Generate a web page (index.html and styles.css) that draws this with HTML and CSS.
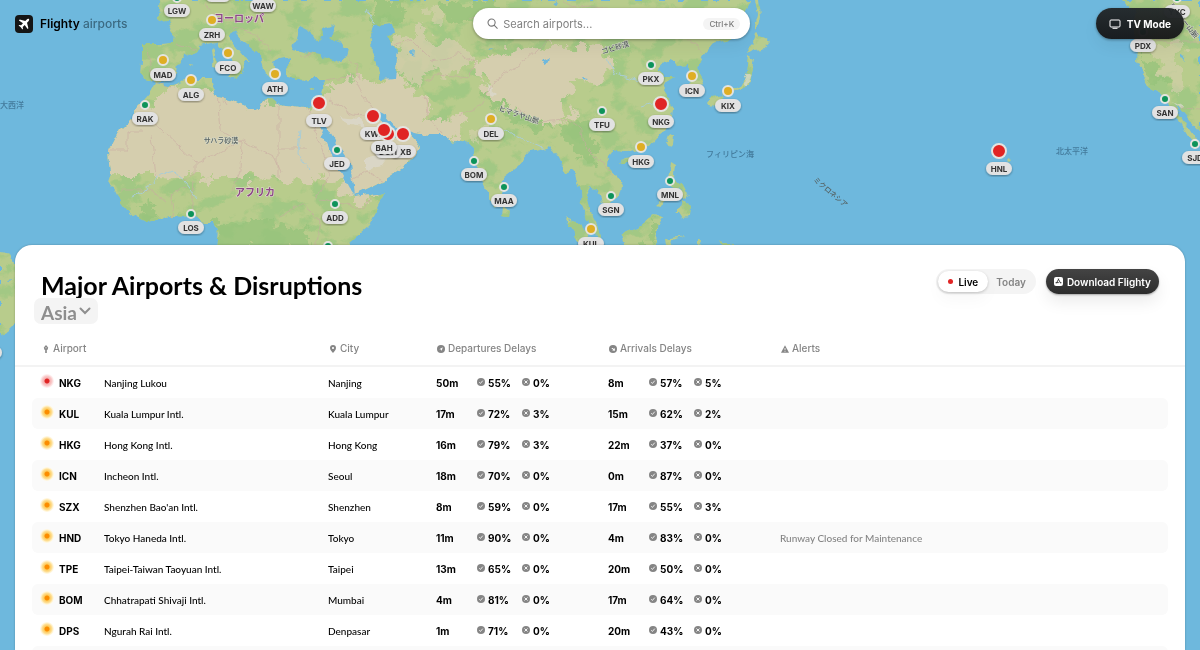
FILE: index.html
```html
<!DOCTYPE html>
<html lang="en">
<head>
<meta charset="utf-8">
<title>Flighty Airports</title>
<link rel="stylesheet" href="styles.css">
</head>
<body>
<svg class="sprite" aria-hidden="true">
  <symbol id="ok" viewBox="0 0 16 16"><circle cx="8" cy="8" r="8" fill="#858585"/><path d="M4.500 8.400l2.400 2.500 4.600-5.600" fill="none" stroke="#fff" stroke-width="1.700"/></symbol>
  <symbol id="no" viewBox="0 0 16 16"><circle cx="8" cy="8" r="8" fill="#858585"/><path d="M5 5l6 6M11 5l-6 6" fill="none" stroke="#fff" stroke-width="1.800"/></symbol>
</svg>

<svg class="map" viewBox="0 0 1200 650" preserveAspectRatio="xMinYMin slice" role="img" aria-label="World map of airports">
  <defs>
    <filter id="coast" x="0" y="0" width="1200" height="650" filterUnits="userSpaceOnUse" color-interpolation-filters="sRGB">
      <feTurbulence type="fractalNoise" baseFrequency="0.09" numOctaves="3" seed="4" result="n"/>
      <feDisplacementMap in="SourceGraphic" in2="n" scale="8" xChannelSelector="R" yChannelSelector="G"/>
    </filter>
    <filter id="rough" x="0" y="0" width="1200" height="650" filterUnits="userSpaceOnUse" color-interpolation-filters="sRGB">
      <feTurbulence type="fractalNoise" baseFrequency="0.07" numOctaves="4" seed="12" result="n"/>
      <feDisplacementMap in="SourceGraphic" in2="n" scale="30" xChannelSelector="R" yChannelSelector="G"/>
    </filter>
    <filter id="patches" x="0" y="0" width="1200" height="650" filterUnits="userSpaceOnUse" color-interpolation-filters="sRGB">
      <feTurbulence type="fractalNoise" baseFrequency="0.035 0.05" numOctaves="4" seed="9" result="n"/>
      <feColorMatrix in="n" type="matrix" values="0 0 0 0 0.6  0 0 0 0 0.78  0 0 0 0 0.5  9 0 0 0 -4.6" result="c"/>
      <feComposite in="c" in2="SourceGraphic" operator="in"/>
    </filter>
    <filter id="shade"><feDropShadow dx="0" dy="1" stdDeviation="1" flood-color="#000" flood-opacity=".4"/></filter>
    <clipPath id="land">
      <path d="M160 0L158 17 168 22 174 32 173 43 160 44 142 44 142 60 141 77 150 79 155 84 167 82 176 73 177 65 184 57 197 51 198 45 206 44 217 42 222 50 232 60 238 68 237 76 241 74 244 67 243 62 251 62 244 57 233 44 230 36 233 30 240 39 251 48 260 56 262 66 267 76 272 78 275 70 273 63 280 60 290 58 287 66 288 77 297 80 310 79 325 79 323 90 318 106 300 108 280 105 272 98 263 100 258 110 243 106 230 100 216 98 213 93 216 88 213 79 190 79 176 84 168 87 155 84 150 93 138 107 133 117 120 130 109 151 111 173 108 182 117 196 130 213 147 222 160 219 173 215 192 216 203 222 213 222 218 230 216 252 345 252 350 243 368 227 378 208 386 192 370 195 355 197 350 187 337 163 325 133 316 118 320 120 335 146 350 169 354 195 383 181 410 163 420 147 415 140 408 132 402 136 393 135 386 130 381 118 377 112 385 116 393 126 402 128 413 133 430 135 447 135 453 143 463 140 472 148 477 167 487 193 495 207 502 200 504 177 517 167 530 152 550 147 558 158 566 174 573 169 580 190 581 206 586 217 594 230 598 241 600 236 596 221 590 210 586 195 590 187 597 190 602 202 607 206 620 195 622 187 618 177 608 166 609 156 614 150 627 153 643 149 655 141 664 131 672 117 673 107 663 90 667 82 675 77 664 77 657 70 665 61 672 58 677 66 688 65 690 80 694 90 700 87 704 80 697 68 703 55 713 43 730 39 741 22 749 0Z"/>
      <path d="M755 0l3 14-3 12-1 3 5-3 2-10-2-16zM755 32l6 6 8 4-6 7-8 1-6 4-1-6 5-5zM749 57l5 3-3 12-2 15-10 1-12 5-8 2-4 9-4 4-3-6 4-6 10-2 8-5 7-3 7-5 3-11zM716 96l5-1 3 3-6 2zM669 134l4 2-1 8-3 3-3-5zM621 160l7-2-1 6-5 0zM504 206l6 5-1 5-6-1zM671 163l5 3-1 10 3 7 6 4-2 4-8-4-5-8zM682 186l6 6-3 8-4-7zM684 201l7 5-1 11-6 1-4-6-6 0 8-5zM671 195l-12 10-3-1 12-10zM656 213l6 5-5 9-1 20-30 5-5-17 17-7zM665 238l20-3-14 5 4 12-8-2zM698 235l3 6-3 7zM565 218l10 4 18 16 9 14-20-4-10-17zM718 241l15 3-4 6zM214 48l2 7-3 2-1-7zM213 57l4 2-1 8-4-2zM226 74l13 0-2 5zM277 84l9 1-8 1zM309 89l7-3-4 4zM189 63l4 1-3 2zM1122 0L1137 12 1134 25 1137 50 1136 62 1145 78 1151 89 1165 96 1170 106 1180 122 1189 137 1195 145 1194 136 1185 124 1176 108 1174 102 1186 116 1198 130 1206 140V0zM1008 157l4 2-3 3zM160-2l12-1 4 3-8 4zM-10 250l20 4 6 12v58l-8 8-8 4h-10z"/>
    </clipPath>
  </defs>
  <rect width="1200" height="650" fill="#6eb8dd"/>
  <g filter="url(#coast)">
    <g clip-path="url(#land)">
      <rect width="1200" height="650" fill="#b8cc8c"/>
      <rect width="1200" height="650" filter="url(#patches)" opacity=".7"/>
      <g fill="#98c47c" filter="url(#rough)" opacity=".8">
        <path d="M372 0h34l-4 22-30 6zM436 4l60-4 4 16-40 8zM148 204l12 12-10 6-16-14zM214 224l40-6 46 8 14 24H216zM560 124l26-6 14 30-12 16-20-18zM640 242l18-26-4 32zM1139 60l14 22 14 8-6-14-10-18zM492 84l22 24 44 20-26 4-44-30z"/>
      </g>
      <g fill="#d5ceae" filter="url(#rough)">
        <path d="M145 102L172 90 206 91 222 98 320 106 331 142 344 172 352 194 340 188 320 176 290 182 250 178 204 178 160 176 94 176V150z"/>
        <path d="M326 84L345 77 362 82 378 100 400 110 430 126 434 148 386 190 355 206 338 158 320 116z"/>
        <path d="M354 76L384 80 396 76 426 96 428 117 462 116 454 146 410 144 385 118 370 98z"/>
        <path d="M396 38L420 28 436 42 462 40 476 64 450 74 424 72 418 86 398 74z" opacity=".75"/>
        <path d="M474 66L506 52 548 48 596 44 612 60 606 76 576 84 562 100 572 118 546 126 514 112 496 100 486 84z"/>
        <path d="M430 6l16 4-6 16-14-6zM480 120l14-4-8 14-8 14-10-4zM1152 50l18-8 16 6-10 16 12 16-8 12-18-12z" opacity=".6"/>
      </g>
      <g fill="#dbdad0" opacity=".7"><path d="M340 116l20 2 4 10-18-4zM366 158l26-6-10 14-16 4zM484 82l14 12-4 3zM746 72l5 2-4 14-4-3zM1172 100l12 6-4 2z"/></g>
      <g fill="none" stroke="#c9a9a2" stroke-width=".8" opacity=".7">
        <path d="M149 118l46 43 22-7 24-14 34 18 6 14M217 92l3 38 20 12M151 134l5 42M109 151h19v-20h14M279 105v44h28M278 149v28M195 161v14l-12 6M241 142l-1 30-8 18M308 108l22 66-14 26M216 78l4 16 6 10M155 84l16 4M148 47l3 28M175 44l20 6M206 2l10 16 24 4 24-8M232 28l20 4 20 18M325 80l28-4 12 22 18 22M330 100l24 14 16 2M383 181l-16-10-14 8M424 96l4 22 14 16M395 44l16-4 20 20 30-6 14 10-6 14-30-4-16 8M460 116l20-10 16-26 30-20 22-20M300 56l40-6 16 14 4 16M516 108l20 14 32-2 12 8 4 18 18 18M590 150l14 14 12 14M470 18l60-6 60-6 70 14 40-8M560 0l40 24 60-4 44 32M1138 42h62M1164 106l36 2M120 190h30l16 12M173 215l-4-22 18-6M192 216l3-36M320 200l20 4 24 4 6-10M316 250l4-30-18-16-22 12"/>
      </g>
      <path d="M132 198l14-8 12-14 14-6 14 12 12 16M300 130l-2 24 12 16M548 156l-8-10-36-16M608 60l8 14 24 6M640 108l18-6M366 10l10 18" fill="none" stroke="#a9cdd6" stroke-width="1"/>
    </g>
    <g fill="#6eb8dd">
      <path d="M293 49l4-15 3-7 10 5 10 8 4-7-2-4 14-5-3 10-4 3 15 10 5 2-2 8-14 4-14-6zM370 34l5-9 18-2 2 9-7 5 10 12-3 29-15 1-3-16-5-13zM410 52l4-3-1 7zM540 62l9-4-3 7zM487 50l7-1-5 2zM553 3l5-2-2 4zM581 78l6 1-4 2zM1180 52l5 4 1 5-3-3zM6 280l8-1-5 2z"/>
      <path d="M316 116l10 10 12 20 13 18 4 30-6-6-14-26-12-28-8-14zM375 110l10 5 9 11 12 3 10 5-7 2-8-4-6 5-8-4-6-12z"/>
    </g>
  </g>

  <g class="place place-land"><text x="239" y="22">ヨーロッパ</text><text x="255" y="196">アフリカ</text></g>
  <g class="place place-sea"><text x="12" y="108">大西洋</text><text x="730" y="157">フィリピン海</text><text x="1072" y="154">北太平洋</text></g>
  <g class="place place-small">
    <text x="221" y="143">サハラ砂漠</text>
    <text transform="translate(616 50) rotate(-17)">ゴビ砂漠</text>
    <text transform="translate(518 117) rotate(19)">ヒマラヤ山脈</text>
    <text transform="translate(829 194) rotate(40)">ミクロネシア</text>
    <text transform="translate(1182 22) rotate(52)">ロッキー山脈</text>
  </g>

  <g class="pins">
    <g transform="translate(177 -2)"><circle class="good" r="4"/><rect x="-13" y="6" width="26" height="13" rx="6.500"/><text y="16">LGW</text></g>
    <g transform="translate(218 -17)"><rect x="-13" y="6" width="26" height="13" rx="6.500"/></g>
    <g transform="translate(263 -7)"><rect x="-13" y="6" width="26" height="13" rx="6.500"/><text y="16">WAW</text></g>
    <g transform="translate(212 20)"><circle class="fair" r="5"/><rect x="-13" y="8" width="26" height="13" rx="6.500"/><text y="18">ZRH</text></g>
    <g transform="translate(163 60)"><circle class="fair" r="5"/><rect x="-13" y="8" width="26" height="13" rx="6.500"/><text y="18">MAD</text></g>
    <g transform="translate(228 53)"><circle class="fair" r="5"/><rect x="-13" y="8" width="26" height="13" rx="6.500"/><text y="18">FCO</text></g>
    <g transform="translate(191 80)"><circle class="fair" r="5"/><rect x="-13" y="8" width="26" height="13" rx="6.500"/><text y="18">ALG</text></g>
    <g transform="translate(275 74)"><circle class="fair" r="5"/><rect x="-13" y="8" width="26" height="13" rx="6.500"/><text y="18">ATH</text></g>
    <g transform="translate(145 105)"><circle class="good" r="4"/><rect x="-13" y="7" width="26" height="13" rx="6.500"/><text y="17">RAK</text></g>
    <g transform="translate(191 214)"><circle class="good" r="4"/><rect x="-13" y="7" width="26" height="13" rx="6.500"/><text y="17">LOS</text></g>
    <g transform="translate(337 150)"><circle class="good" r="4"/><rect x="-13" y="7" width="26" height="13" rx="6.500"/><text y="17">JED</text></g>
    <g transform="translate(335 204)"><circle class="good" r="4"/><rect x="-13" y="7" width="26" height="13" rx="6.500"/><text y="17">ADD</text></g>
    <g transform="translate(328 246)"><circle class="good" r="4"/></g>
    <g transform="translate(319 103)"><circle class="bad" r="7"/><rect x="-13" y="11" width="26" height="13" rx="6.500"/><text y="21">TLV</text></g>
    <g transform="translate(373 116)"><circle class="bad" r="7"/><rect x="-13" y="11" width="26" height="13" rx="6.500"/><text y="21">KWI</text></g>
    <g transform="translate(403 134)"><circle class="bad" r="7"/><rect x="-13" y="11" width="26" height="13" rx="6.500"/><text y="21">DXB</text></g>
    <g transform="translate(388 134)"><circle class="bad" r="7"/><rect x="-13" y="11" width="26" height="13" rx="6.500"/><text y="21">DOH</text></g>
    <g transform="translate(384 130)"><circle class="bad" r="7"/><rect x="-13" y="11" width="26" height="13" rx="6.500"/><text y="21">BAH</text></g>
    <g transform="translate(491 119)"><circle class="fair" r="5"/><rect x="-13" y="8" width="26" height="13" rx="6.500"/><text y="18">DEL</text></g>
    <g transform="translate(474 161)"><circle class="good" r="4"/><rect x="-13" y="7" width="26" height="13" rx="6.500"/><text y="17">BOM</text></g>
    <g transform="translate(504 187)"><circle class="good" r="4"/><rect x="-13" y="7" width="26" height="13" rx="6.500"/><text y="17">MAA</text></g>
    <g transform="translate(651 65)"><circle class="good" r="4"/><rect x="-13" y="7" width="26" height="13" rx="6.500"/><text y="17">PKX</text></g>
    <g transform="translate(692 76)"><circle class="fair" r="5"/><rect x="-13" y="8" width="26" height="13" rx="6.500"/><text y="18">ICN</text></g>
    <g transform="translate(728 91)"><circle class="fair" r="5"/><rect x="-13" y="8" width="26" height="13" rx="6.500"/><text y="18">KIX</text></g>
    <g transform="translate(661 104)"><circle class="bad" r="7"/><rect x="-13" y="11" width="26" height="13" rx="6.500"/><text y="21">NKG</text></g>
    <g transform="translate(602 111)"><circle class="good" r="4"/><rect x="-13" y="7" width="26" height="13" rx="6.500"/><text y="17">TFU</text></g>
    <g transform="translate(641 147)"><circle class="fair" r="5"/><rect x="-13" y="8" width="26" height="13" rx="6.500"/><text y="18">HKG</text></g>
    <g transform="translate(670 181)"><circle class="good" r="4"/><rect x="-13" y="7" width="26" height="13" rx="6.500"/><text y="17">MNL</text></g>
    <g transform="translate(611 196)"><circle class="good" r="4"/><rect x="-13" y="7" width="26" height="13" rx="6.500"/><text y="17">SGN</text></g>
    <g transform="translate(591 229)"><circle class="fair" r="5"/><rect x="-13" y="8" width="26" height="13" rx="6.500"/><text y="18">KUL</text></g>
    <g transform="translate(999 151)"><circle class="bad" r="7"/><rect x="-13" y="11" width="26" height="13" rx="6.500"/><text y="21">HNL</text></g>
    <g transform="translate(1177 -2)"><circle class="good" r="4"/><rect x="-13" y="7" width="26" height="13" rx="6.500"/><text y="17">YYC</text></g>
    <g transform="translate(1143 32)"><circle class="good" r="4"/><rect x="-13" y="7" width="26" height="13" rx="6.500"/><text y="17">PDX</text></g>
    <g transform="translate(1165 99)"><circle class="good" r="4"/><rect x="-13" y="7" width="26" height="13" rx="6.500"/><text y="17">SAN</text></g>
    <g transform="translate(1195 144)"><circle class="good" r="4"/><rect x="-13" y="7" width="26" height="13" rx="6.500"/><text y="17">SJD</text></g>
    <g transform="translate(-11 339)"><rect x="-13" y="7" width="26" height="13" rx="6.500"/></g>
  </g>
</svg>

<header class="topbar">
  <a class="brand" href="#">
    <svg class="logo" viewBox="0 0 18 18" aria-hidden="true"><rect width="18" height="18" rx="4" fill="#151515"/><path d="M13.900 4.100c-.6-.6-1.500-.2-2.100.4L10.300 6 4.700 4.600 3.900 5.400 8 8.300 6.100 10.300 4.200 10 3.600 10.600 5.800 12.200 7.400 14.400 8 13.800 7.700 11.900 9.700 10 12.600 14.100 13.400 13.300 12 7.700 13.500 6.200c.6-.6 1-1.500.4-2.100z" fill="#fff"/></svg>
    <span><strong>Flighty</strong> airports</span>
  </a>
  <label class="search">
    <svg viewBox="0 0 12 12" aria-hidden="true"><circle cx="5" cy="5" r="3.900"/><path d="M8 8l3.200 3.200"/></svg>
    <input type="text" placeholder="Search airports..." aria-label="Search airports">
    <kbd>Ctrl+K</kbd>
  </label>
  <button class="tv" type="button">
    <svg viewBox="0 0 12 10" aria-hidden="true"><rect x="1" y="1" width="10" height="7" rx="1"/><path d="M3.500 9.300h5"/></svg>
    TV Mode
  </button>
</header>

<main class="panel">
  <div class="panel-head">
    <div class="heading">
      <h1>Major Airports &amp; Disruptions</h1>
      <div class="region">
        <select aria-label="Region"><option>Asia</option></select>
        <svg viewBox="0 0 12 8" aria-hidden="true"><path d="M1.500 1.500L6 6l4.500-4.500"/></svg>
      </div>
    </div>
    <div class="actions">
      <div class="toggle">
        <button class="on" type="button"><i></i>Live</button>
        <button type="button">Today</button>
      </div>
      <a class="download" href="#">
        <svg viewBox="0 0 9 9" aria-hidden="true"><rect width="9" height="9" rx="2" fill="#fff"/><path d="M4.800 1.700L2.400 6.300M4.200 1.700l2.400 4.600M1.600 5.600h3.200M6.200 5.600h1.200" fill="none" stroke="#333" stroke-width=".9"/></svg>
        Download Flighty
      </a>
    </div>
  </div>

  <table>
    <thead>
      <tr>
        <th class="c-airport"><svg viewBox="0 0 8 8"><path d="M4 0l2.200 2.400L5.600 4.800H4.800V8H3.200V4.800H2.400L1.800 2.400z"/><path d="M2.800 2.800h2.400" stroke="#fff" stroke-width=".5"/></svg>Airport</th>
        <th class="c-city"><svg viewBox="0 0 8 8"><path d="M4 0a3 3 0 0 1 3 3c0 2.200-2 3.600-3 5C3 6.600 1 5.200 1 3a3 3 0 0 1 3-3z"/><circle cx="4" cy="3" r="1.100" fill="#fff"/></svg>City</th>
        <th class="c-delay"><svg viewBox="0 0 8 8"><circle cx="4" cy="4" r="4"/><path d="M2.300 4.200L5.800 2.300 4.600 5.900 4 4.500z" fill="#fff"/></svg>Departures Delays</th>
        <th class="c-delay"><svg viewBox="0 0 8 8"><circle cx="4" cy="4" r="4"/><path d="M2.300 2.900l1.500.2 1 .9.900-.9.300 2.700-2.800-.3.900-.8z" fill="#fff"/></svg>Arrivals Delays</th>
        <th><svg viewBox="0 0 8 8"><path d="M4 .3L8 7.700H0z"/><path d="M4 3v2.300M4 6v.8" stroke="#fff" stroke-width=".8"/></svg>Alerts</th>
      </tr>
    </thead>
    <tbody>
      <tr><td><div class="airport"><i class="dot red"></i><b>NKG</b><span>Nanjing Lukou</span></div></td><td>Nanjing</td>
        <td><div class="delay"><b>50m</b><svg><use href="#ok"/></svg><b>55%</b><svg><use href="#no"/></svg><b>0%</b></div></td>
        <td><div class="delay"><b>8m</b><svg><use href="#ok"/></svg><b>57%</b><svg><use href="#no"/></svg><b>5%</b></div></td><td></td></tr>
      <tr><td><div class="airport"><i class="dot"></i><b>KUL</b><span>Kuala Lumpur Intl.</span></div></td><td>Kuala Lumpur</td>
        <td><div class="delay"><b>17m</b><svg><use href="#ok"/></svg><b>72%</b><svg><use href="#no"/></svg><b>3%</b></div></td>
        <td><div class="delay"><b>15m</b><svg><use href="#ok"/></svg><b>62%</b><svg><use href="#no"/></svg><b>2%</b></div></td><td></td></tr>
      <tr><td><div class="airport"><i class="dot"></i><b>HKG</b><span>Hong Kong Intl.</span></div></td><td>Hong Kong</td>
        <td><div class="delay"><b>16m</b><svg><use href="#ok"/></svg><b>79%</b><svg><use href="#no"/></svg><b>3%</b></div></td>
        <td><div class="delay"><b>22m</b><svg><use href="#ok"/></svg><b>37%</b><svg><use href="#no"/></svg><b>0%</b></div></td><td></td></tr>
      <tr><td><div class="airport"><i class="dot"></i><b>ICN</b><span>Incheon Intl.</span></div></td><td>Seoul</td>
        <td><div class="delay"><b>18m</b><svg><use href="#ok"/></svg><b>70%</b><svg><use href="#no"/></svg><b>0%</b></div></td>
        <td><div class="delay"><b>0m</b><svg><use href="#ok"/></svg><b>87%</b><svg><use href="#no"/></svg><b>0%</b></div></td><td></td></tr>
      <tr><td><div class="airport"><i class="dot"></i><b>SZX</b><span>Shenzhen Bao'an Intl.</span></div></td><td>Shenzhen</td>
        <td><div class="delay"><b>8m</b><svg><use href="#ok"/></svg><b>59%</b><svg><use href="#no"/></svg><b>0%</b></div></td>
        <td><div class="delay"><b>17m</b><svg><use href="#ok"/></svg><b>55%</b><svg><use href="#no"/></svg><b>3%</b></div></td><td></td></tr>
      <tr><td><div class="airport"><i class="dot"></i><b>HND</b><span>Tokyo Haneda Intl.</span></div></td><td>Tokyo</td>
        <td><div class="delay"><b>11m</b><svg><use href="#ok"/></svg><b>90%</b><svg><use href="#no"/></svg><b>0%</b></div></td>
        <td><div class="delay"><b>4m</b><svg><use href="#ok"/></svg><b>83%</b><svg><use href="#no"/></svg><b>0%</b></div></td><td class="alert">Runway Closed for Maintenance</td></tr>
      <tr><td><div class="airport"><i class="dot"></i><b>TPE</b><span>Taipei-Taiwan Taoyuan Intl.</span></div></td><td>Taipei</td>
        <td><div class="delay"><b>13m</b><svg><use href="#ok"/></svg><b>65%</b><svg><use href="#no"/></svg><b>0%</b></div></td>
        <td><div class="delay"><b>20m</b><svg><use href="#ok"/></svg><b>50%</b><svg><use href="#no"/></svg><b>0%</b></div></td><td></td></tr>
      <tr><td><div class="airport"><i class="dot"></i><b>BOM</b><span>Chhatrapati Shivaji Intl.</span></div></td><td>Mumbai</td>
        <td><div class="delay"><b>4m</b><svg><use href="#ok"/></svg><b>81%</b><svg><use href="#no"/></svg><b>0%</b></div></td>
        <td><div class="delay"><b>17m</b><svg><use href="#ok"/></svg><b>64%</b><svg><use href="#no"/></svg><b>0%</b></div></td><td></td></tr>
      <tr><td><div class="airport"><i class="dot"></i><b>DPS</b><span>Ngurah Rai Intl.</span></div></td><td>Denpasar</td>
        <td><div class="delay"><b>1m</b><svg><use href="#ok"/></svg><b>71%</b><svg><use href="#no"/></svg><b>0%</b></div></td>
        <td><div class="delay"><b>20m</b><svg><use href="#ok"/></svg><b>43%</b><svg><use href="#no"/></svg><b>0%</b></div></td><td></td></tr>
      <tr><td></td><td></td><td></td><td></td><td></td></tr>
    </tbody>
  </table>
</main>
</body>
</html>
```
FILE: styles.css
```css
* { box-sizing: border-box; }
html, body { height: 100%; }
body {
  margin: 0;
  overflow: hidden;
  display: flex;
  flex-direction: column;
  background: #6eb8dd;
  color: #000;
  font-family: Inter, "Liberation Sans", sans-serif;
  font-size: 10px;
}
button, input, select { font: inherit; color: inherit; border: 0; margin: 0; padding: 0; background: none; }
button { cursor: pointer; }
a { color: inherit; text-decoration: none; }
.sprite { position: absolute; width: 0; height: 0; }

/* Map behind everything */
.map { position: absolute; inset: 0; width: 100%; height: 100%; }
.place { font-family: "Noto Sans CJK JP", sans-serif; text-anchor: middle; }
.place-land { font-size: 10px; font-weight: 700; fill: #8c4a86; stroke: #e6dcd8; stroke-width: 1px; paint-order: stroke; }
.place-sea { font-size: 8px; font-weight: 500; fill: #437a9b; }
.place-small { font-size: 7px; font-weight: 500; fill: #555f5f; stroke: #d8dccb; stroke-width: 1px; paint-order: stroke; }
.place-small text:nth-child(4) { stroke: none; }
.pins { text-anchor: middle; font-size: 8px; font-weight: 700; fill: #333; }
.pins rect { fill: #e2e2e2; filter: url(#shade); }
.pins circle { stroke: #e4e4e0; stroke-width: 2px; }
.bad { fill: #e02424; }
.fair { fill: #dfae24; }
.good { fill: #0d935a; }

/* Top bar */
.topbar {
  position: relative;
  display: flex;
  justify-content: space-between;
  align-items: center;
  padding: 8px 16px 0 15px;
  height: 39px;
}
.brand { display: flex; align-items: center; gap: 7px; font-size: 12px; line-height: 14px; font-weight: 500; color: #3b6a82; }
.brand strong { font-weight: 600; color: #000; }
.logo { width: 18px; height: 18px; }
.search {
  display: flex;
  align-items: center;
  gap: 5px;
  width: 277px;
  height: 31px;
  padding: 0 10px 0 14px;
  border-radius: 16px;
  background: #fff;
  box-shadow: 0 1px 3px rgba(0, 0, 0, .35), 0 8px 16px rgba(0, 0, 0, .05);
}
.search svg { width: 11px; height: 11px; fill: none; stroke: #777; stroke-width: 1.2; stroke-linecap: round; }
.search input { flex: 1; min-width: 0; outline: 0; font-size: 11px; }
.search input::placeholder { color: #808080; opacity: 1; }
.search kbd { padding: 0 6px; border-radius: 6px; background: #f4f4f4; color: #777; font: 500 8px/12px Inter, sans-serif; }
.tv {
  display: flex;
  align-items: center;
  gap: 6px;
  height: 31px;
  padding: 0 13px;
  border-radius: 16px;
  background: linear-gradient(rgba(36, 40, 42, .97), rgba(22, 23, 25, .97));
  color: #fff;
  font-weight: 700;
  box-shadow: 0 1px 3px rgba(0, 0, 0, .35), 0 8px 16px rgba(0, 0, 0, .05);
}
.tv svg { width: 12px; height: 10px; fill: none; stroke: #fff; stroke-width: 1; }

/* Panel */
.panel {
  position: relative;
  flex: 1;
  margin: 206px 15px 0;
  border-radius: 17px 17px 0 0;
  background: #fff;
  box-shadow: 0 0 2px rgba(0, 0, 0, .3);
  overflow: hidden;
}
.panel-head { display: flex; justify-content: space-between; align-items: flex-start; padding: 24px 26px 0 19px; }
h1 { margin: 3px 0 0 7px; font: 700 25px/26px Lato, sans-serif; white-space: nowrap; }
.region {
  position: relative;
  display: inline-flex;
  align-items: center;
  height: 26px;
  border-radius: 7px;
  background: #f4f4f4;
  color: #8e8e8e;
}
.region select { appearance: none; outline: 0; height: 26px; width: 64px; padding: 4px 0 0 7px; font: 700 19px/22px Lato, sans-serif; }
.region svg { position: absolute; right: 7px; top: 9px; width: 12px; height: 8px; fill: none; stroke: #8e8e8e; stroke-width: 2; stroke-linecap: round; pointer-events: none; }
.actions { display: flex; gap: 10px; }
.toggle { display: flex; height: 25px; padding: 2px; border-radius: 13px; background: #f4f4f4; font-weight: 600; color: #858585; }
.toggle button { display: flex; align-items: center; gap: 5px; padding: 0 8px; border-radius: 11px; }
.toggle .on { padding: 0 10px; background: #fff; color: #000; box-shadow: 0 1px 3px rgba(0, 0, 0, .2), 0 8px 16px rgba(0, 0, 0, .03); }
.toggle i { width: 5px; height: 5px; border-radius: 50%; background: #e02424; }
.download {
  display: flex;
  align-items: center;
  gap: 4px;
  height: 25px;
  padding: 0 8px;
  border-radius: 13px;
  background: linear-gradient(#444, #2c2c2c);
  color: #fff;
  font-weight: 600;
  box-shadow: 0 1px 2px rgba(0, 0, 0, .3), 0 8px 16px rgba(0, 0, 0, .08);
}
.download svg { width: 9px; height: 9px; }

/* Table */
table { width: 100%; margin-top: 7px; border-collapse: separate; border-spacing: 0; table-layout: fixed; font-family: Lato, sans-serif; font-size: 10px; }
.c-airport { width: 305px; }
.c-city { width: 108px; }
.c-delay { width: 172px; }
th {
  height: 36px;
  padding: 0 0 0 9px;
  border-bottom: 2px solid #f3f3f3;
  color: #858585;
  font: 500 10px/12px Inter, sans-serif;
  text-align: left;
  white-space: nowrap;
}
th svg { width: 8px; height: 8px; margin-right: 3px; fill: #858585; vertical-align: -1px; }
.c-airport { padding-left: 27px; }
td { height: 31px; padding: 0 0 0 8px; line-height: 14px; font-weight: 500; white-space: nowrap; }
td:first-child { border-left: 17px solid transparent; border-radius: 23px 0 0 23px / 6px 0 0 6px; background-clip: padding-box; }
td:last-child { border-right: 17px solid transparent; border-radius: 0 23px 23px 0 / 0 6px 6px 0; background-clip: padding-box; }
tr:nth-child(even) td { background-color: #fafafa; }
td b { font: 700 10px/14px Inter, sans-serif; }
.airport, .delay { display: flex; align-items: center; }
.airport b { width: 45px; margin-left: 5px; }
.dot {
  width: 14px;
  height: 14px;
  margin-bottom: 3px;
  border-radius: 50%;
  background: radial-gradient(circle closest-side, #fb8c00 2px, #fdcb5c 3px, #fee09a 5px, #fff3d0 6px, #fff9ea 7px);
}
.dot.red { background: radial-gradient(circle closest-side, #e02424 2px, #f6b0b0 3px, #f9cccc 5px, #fde6e6 6px, #fef4f4 7px); }
.delay svg { width: 8px; height: 8px; margin: 0 3px 2px 0; }
.delay b:first-child { width: 41px; }
.delay b:nth-child(3) { width: 34px; }
.alert { color: #858585; }
```
